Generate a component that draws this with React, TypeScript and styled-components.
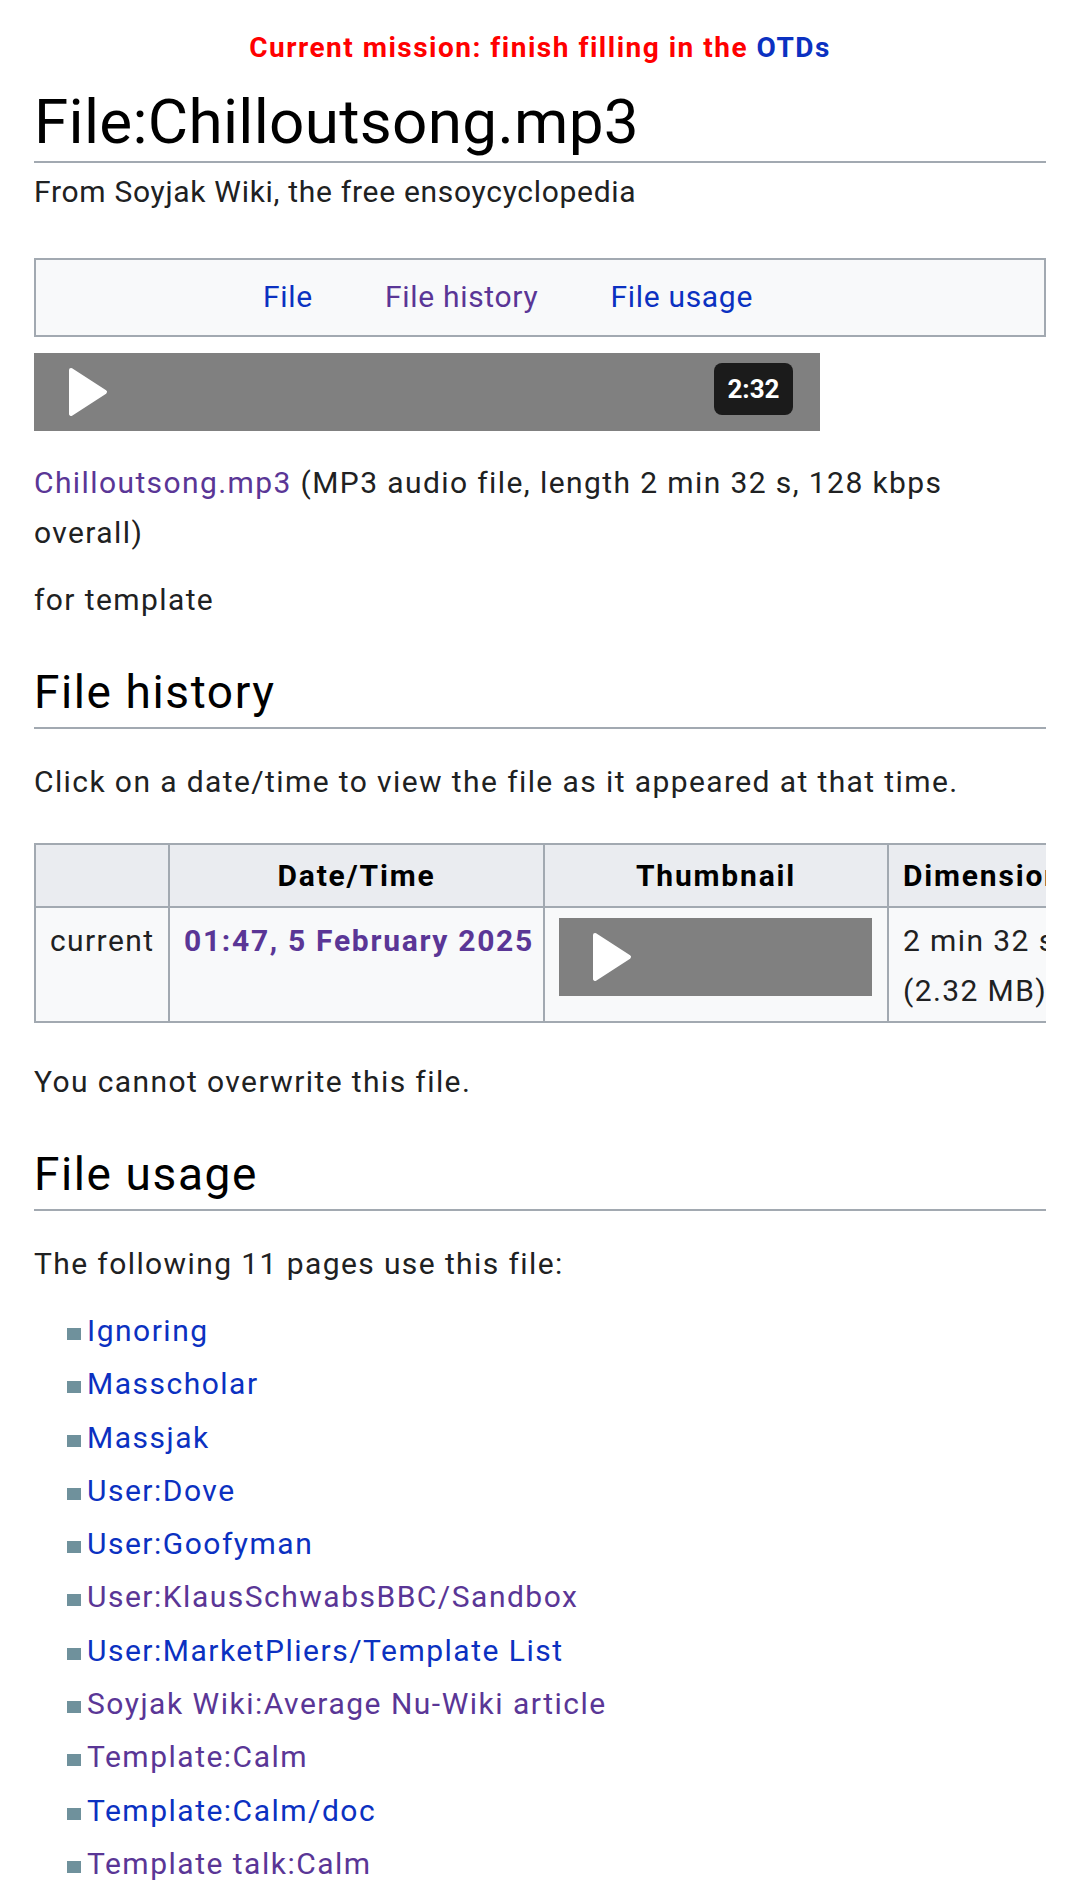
import React from "react";
import styled, { createGlobalStyle } from "styled-components";

const BLUE = "#0b31c1";
const PURPLE = "#5a3696";
const BORDER = "#a2a9b1";
const TEXT = "#202122";

const GlobalStyle = createGlobalStyle`
  html, body { margin: 0; padding: 0; background: #fff; }
  body {
    font-family: Roboto, "Noto Sans", "Liberation Sans", sans-serif;
    color: ${TEXT};
    -webkit-font-smoothing: antialiased;
  }
  * { box-sizing: border-box; }
`;

const Page = styled.div`
  width: 1080px;
  padding: 32px 34px 40px;
  overflow: hidden;
`;

const Mission = styled.div`
  text-align: center;
  font-size: 28px;
  font-weight: 700;
  line-height: 32px;
  letter-spacing: 1.5px;
  color: #ff0000;
`;

const Link = styled.a<{ $visited?: boolean; $bold?: boolean }>`
  color: ${(p) => (p.$visited ? PURPLE : BLUE)};
  font-weight: ${(p) => (p.$bold ? 700 : "inherit")};
  letter-spacing: ${(p) => (p.$bold ? "1.7px" : "inherit")};
  text-decoration: none;
`;

const Title = styled.h1`
  margin: 23px 0 0;
  font-size: 62px;
  font-weight: 400;
  line-height: 70px;
  letter-spacing: 0.3px;
  color: #000;
  padding-bottom: 4px;
  border-bottom: 2px solid ${BORDER};
`;

const Tagline = styled.div`
  margin-top: 9px;
  font-size: 30px;
  line-height: 40px;
  letter-spacing: 0.7px;
`;

const TabBox = styled.ul`
  margin: 46px 0 0;
  list-style: none;
  border: 2px solid ${BORDER};
  background: #f8f9fa;
  padding: 17px 64px 18px 0;
  display: flex;
  justify-content: center;
  gap: 72px;
  font-size: 30px;
  line-height: 40px;
  letter-spacing: 0.7px;
`;

const Tab = styled.li``;

const Player = styled.div<{ $width: number }>`
  width: ${(p) => p.$width}px;
  height: 78px;
  background: #808080;
  display: flex;
  align-items: center;
  justify-content: space-between;
  padding: 0 27px 0 34px;
`;

const MainPlayer = styled(Player)`
  margin-top: 16px;
`;

const ThumbPlayer = styled(Player)`
  margin-top: 2px;
  padding-left: 33px;
`;

const TimeBadge = styled.div`
  width: 79px;
  height: 52px;
  border-radius: 8px;
  background: #1b1b1b;
  color: #fff;
  font-size: 26px;
  font-weight: 700;
  display: flex;
  align-items: center;
  justify-content: center;
  margin-top: -6px;
`;

const Para = styled.p<{ $gap: number }>`
  margin: ${(p) => p.$gap}px 0 0;
  font-size: 30px;
  line-height: 50px;
  letter-spacing: 1.4px;
`;

const Heading = styled.h2`
  margin: 39px 0 0;
  font-size: 46px;
  font-weight: 400;
  line-height: 56px;
  letter-spacing: 1.6px;
  color: #000;
  padding-bottom: 7px;
  border-bottom: 2px solid ${BORDER};
`;

const TableWrap = styled.div`
  margin-top: 36px;
  overflow: hidden;
`;

const Table = styled.table`
  border-collapse: separate;
  border-spacing: 0;
  table-layout: fixed;
  width: 1600px;
  border-top: 2px solid ${BORDER};
  border-left: 2px solid ${BORDER};
  font-size: 30px;
  line-height: 50px;
  letter-spacing: 1.4px;
`;

const Th = styled.th`
  background: #eaecf0;
  font-weight: 700;
  letter-spacing: 1.8px;
  text-align: center;
  padding: 6px 14px 5px;
  border-right: 2px solid ${BORDER};
  border-bottom: 2px solid ${BORDER};
  white-space: nowrap;
  color: #000;
`;

const Td = styled.td`
  background: #f8f9fa;
  vertical-align: top;
  text-align: left;
  padding: 8px 14px 5px;
  border-right: 2px solid ${BORDER};
  border-bottom: 2px solid ${BORDER};
`;

const NoWrap = styled.span`
  white-space: nowrap;
`;

const UsageList = styled.ul`
  margin: 15px 0 0;
  padding: 0 0 0 33px;
  list-style: none;
  font-size: 30px;
  line-height: 53.3px;
  letter-spacing: 1.5px;
`;

const UsageItem = styled.li`
  &::before {
    content: "";
    display: inline-block;
    width: 14px;
    height: 12px;
    margin-right: 6px;
    background: #6f919c;
    vertical-align: 1px;
  }
`;

const PlayIcon = () => (
  <svg width="40" height="50" viewBox="0 0 40 50" aria-hidden="true">
    <path
      d="M3 3 L37 25 L3 47 Z"
      fill="#fff"
      stroke="#fff"
      strokeWidth="4"
      strokeLinejoin="round"
    />
  </svg>
);

const usage: { label: string; visited?: boolean }[] = [
  { label: "Ignoring" },
  { label: "Masscholar" },
  { label: "Massjak" },
  { label: "User:Dove" },
  { label: "User:Goofyman" },
  { label: "User:KlausSchwabsBBC/Sandbox", visited: true },
  { label: "User:MarketPliers/Template List" },
  { label: "Soyjak Wiki:Average Nu-Wiki article", visited: true },
  { label: "Template:Calm", visited: true },
  { label: "Template:Calm/doc" },
  { label: "Template talk:Calm", visited: true },
];

export default function App() {
  return (
    <>
      <GlobalStyle />
      <Page>
        <Mission>
          Current mission: finish filling in the <Link href="#">OTDs</Link>
        </Mission>
        <Title>File:Chilloutsong.mp3</Title>
        <Tagline>From Soyjak Wiki, the free ensoycyclopedia</Tagline>

        <TabBox>
          <Tab>
            <Link href="#">File</Link>
          </Tab>
          <Tab>
            <Link href="#" $visited>
              File history
            </Link>
          </Tab>
          <Tab>
            <Link href="#">File usage</Link>
          </Tab>
        </TabBox>

        <MainPlayer $width={786}>
          <PlayIcon />
          <TimeBadge>2:32</TimeBadge>
        </MainPlayer>

        <Para $gap={27}>
          <Link href="#" $visited>
            Chilloutsong.mp3
          </Link>{" "}
          (MP3 audio file, length 2 min 32 s, 128 kbps overall)
        </Para>
        <Para $gap={17}>for template</Para>

        <Heading>File history</Heading>
        <Para $gap={28}>Click on a date/time to view the file as it appeared at that time.</Para>

        <TableWrap>
          <Table>
            <colgroup>
              <col style={{ width: 134 }} />
              <col style={{ width: 375 }} />
              <col style={{ width: 344 }} />
              <col style={{ width: 200 }} />
              <col style={{ width: 250 }} />
              <col style={{ width: 295 }} />
            </colgroup>
            <thead>
              <tr>
                <Th></Th>
                <Th>Date/Time</Th>
                <Th>Thumbnail</Th>
                <Th>Dimensions</Th>
                <Th>User</Th>
                <Th>Comment</Th>
              </tr>
            </thead>
            <tbody>
              <tr>
                <Td>current</Td>
                <Td>
                  <NoWrap>
                    <Link href="#" $visited $bold>
                      01:47, 5 February 2025
                    </Link>
                  </NoWrap>
                </Td>
                <Td>
                  <ThumbPlayer $width={313}>
                    <PlayIcon />
                  </ThumbPlayer>
                </Td>
                <Td>
                  2 min 32 s <NoWrap>(2.32 MB)</NoWrap>
                </Td>
                <Td>
                  <Link href="#">Chillout</Link>
                </Td>
                <Td>for template</Td>
              </tr>
            </tbody>
          </Table>
        </TableWrap>

        <Para $gap={34}>You cannot overwrite this file.</Para>

        <Heading>File usage</Heading>
        <Para $gap={28}>The following 11 pages use this file:</Para>
        <UsageList>
          {usage.map((u) => (
            <UsageItem key={u.label}>
              <Link href="#" $visited={u.visited}>
                {u.label}
              </Link>
            </UsageItem>
          ))}
        </UsageList>
      </Page>
    </>
  );
}
